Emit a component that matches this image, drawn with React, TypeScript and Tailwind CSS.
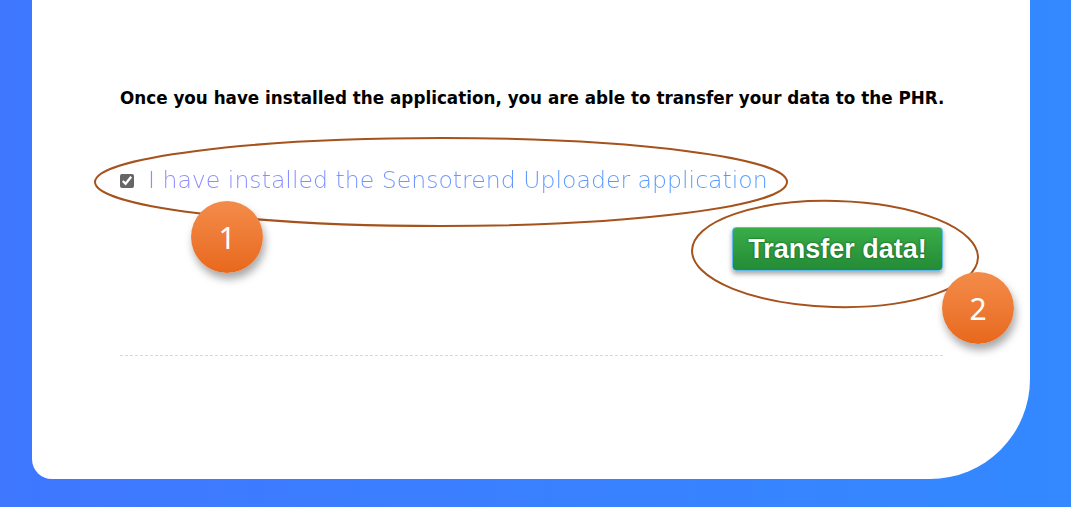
import { useState } from "react";

function Badge({ n, className }: { n: string; className: string }) {
  return (
    <div
      className={`absolute w-[72px] h-[72px] rounded-full bg-gradient-to-b from-[#f38c49] to-[#e8681b] shadow-[2px_6px_8px_rgba(0,0,0,0.35)] flex items-center justify-center text-white text-[30px] font-['Noto_Sans',sans-serif] ${className}`}
    >
      {n}
    </div>
  );
}

export default function App() {
  const [installed, setInstalled] = useState(true);

  return (
    <div className="relative w-[1071px] h-[507px] overflow-hidden bg-gradient-to-r from-[#3f77ff] to-[#3389ff]">
      <div className="ml-[32px] w-[998px] h-[479px] bg-white rounded-bl-[20px] rounded-br-[100px] pt-[86px] pl-[88px] pr-[87px] font-['DejaVu_Sans',sans-serif]">
        <p className="text-[16.8px] font-bold text-black leading-6 whitespace-nowrap">
          Once you have installed the application, you are able to transfer your data to the PHR.
        </p>

        <label className="mt-[55px] flex items-center gap-[14px] cursor-pointer">
          <input
            type="checkbox"
            checked={installed}
            onChange={(e) => setInstalled(e.target.checked)}
            className="w-[14px] h-[14px] accent-[#666666]"
          />
          <span className="text-[23.6px] font-extralight leading-[31px] whitespace-nowrap bg-gradient-to-r from-[#9488ff] via-[#6897ff] to-[#4f9cff] bg-clip-text text-transparent">
            I have installed the Sensotrend Uploader application
          </span>
        </label>

        <div className="mt-[31px] flex justify-end">
          <button className="w-[211px] h-[44px] rounded-[4px] border border-[#62b8e8] bg-gradient-to-b from-[#39ad48] to-[#238b36] shadow-[0_3px_5px_rgba(0,0,0,0.35)] text-white text-[27px] font-bold font-['Liberation_Sans',Arial,sans-serif] [text-shadow:0_0_2px_rgba(0,60,0,0.9)]">
            Transfer data!
          </button>
        </div>

        <div className="mt-[84px] border-t border-dashed border-[#d8d8d8]" />
      </div>

      <svg
        className="absolute inset-0 w-full h-full pointer-events-none"
        viewBox="0 0 1071 507"
        fill="none"
      >
        <ellipse cx="441" cy="182" rx="346" ry="44" stroke="#a5521c" strokeWidth="2" />
        <ellipse cx="835" cy="254" rx="143" ry="53" stroke="#a5521c" strokeWidth="2" transform="rotate(1.5 835 254)" />
      </svg>

      <Badge n="1" className="left-[191px] top-[201px]" />
      <Badge n="2" className="left-[942px] top-[272px]" />
    </div>
  );
}
